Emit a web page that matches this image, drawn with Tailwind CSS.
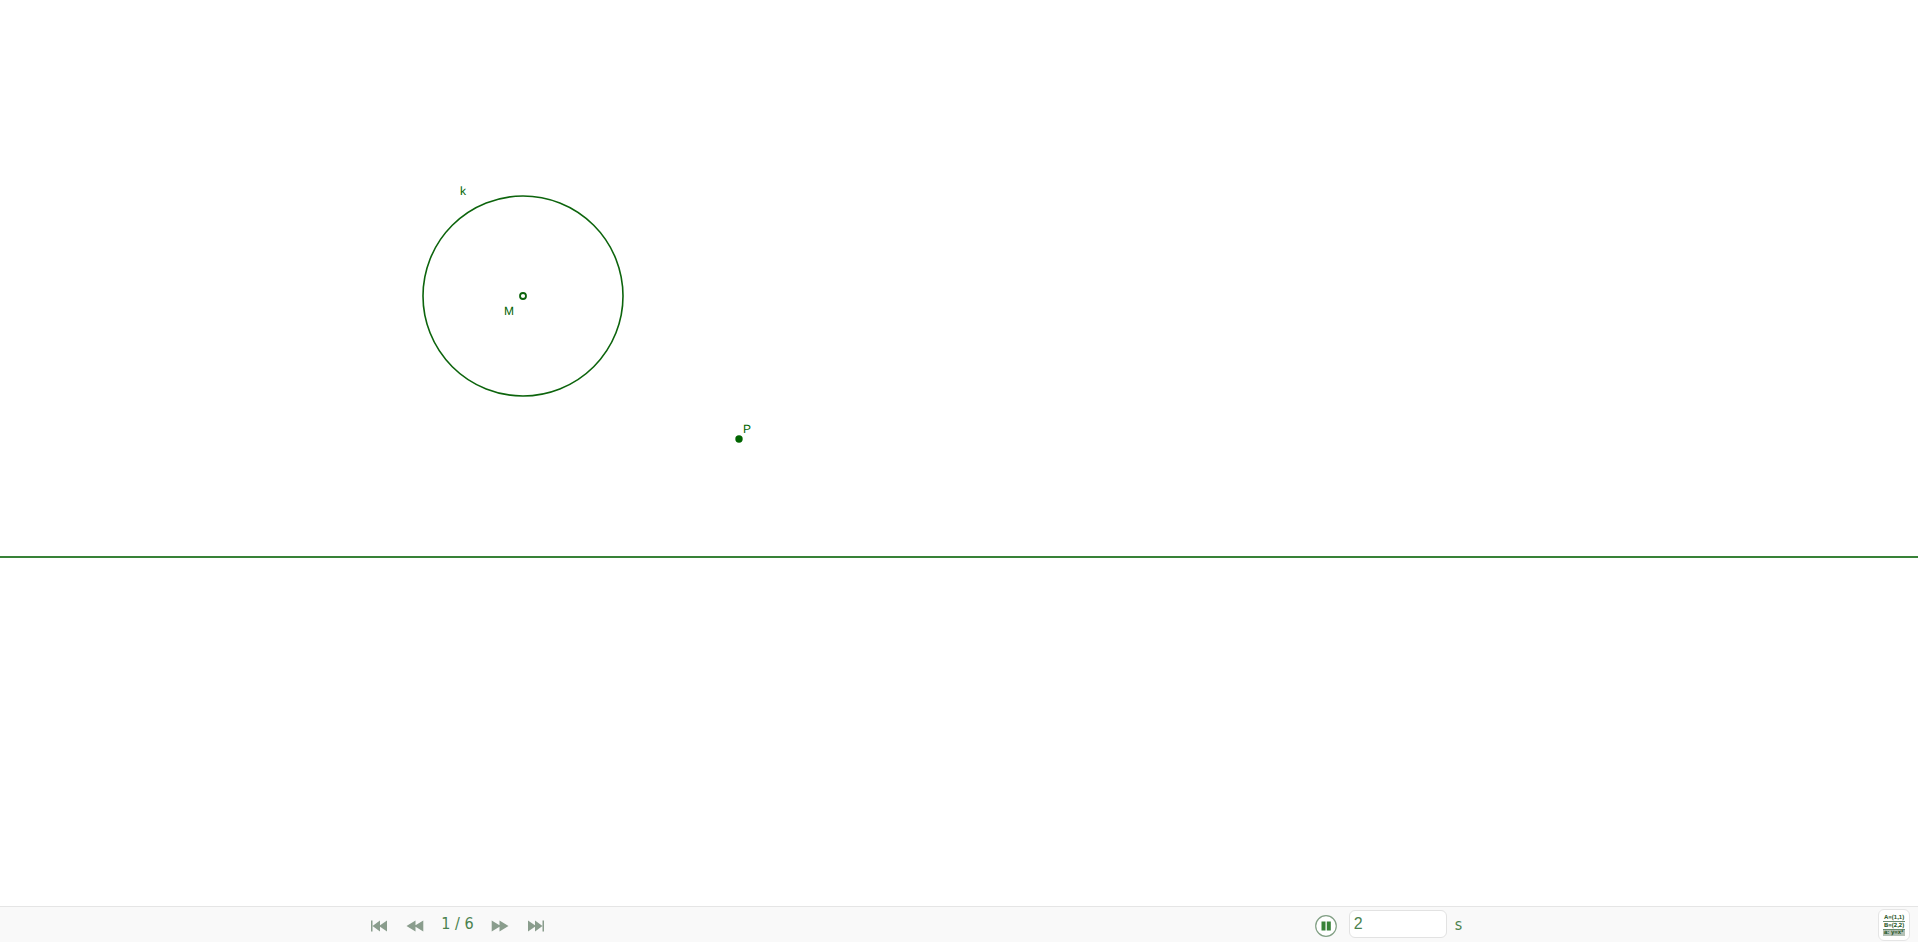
<!DOCTYPE html>
<html lang="en">
<head>
<meta charset="utf-8">
<title>Circle and point construction</title>
<script src="https://cdn.jsdelivr.net/npm/@tailwindcss/browser@4"></script>
</head>
<body class="flex h-screen flex-col overflow-hidden bg-white pr-0.5 pb-px font-['DejaVu_Sans_Condensed','DejaVu_Sans',sans-serif]">
  <main class="min-h-0 flex-1">
    <svg class="block h-full w-full font-['Liberation_Sans',sans-serif] text-xs" text-rendering="geometricPrecision" role="img" aria-label="Circle k with centre M, point P and a line">
      <line x1="0" y1="557" x2="100%" y2="557" stroke="#388238" stroke-width="2"/>
      <circle cx="523" cy="296" r="100" fill="none" stroke="#0c640c" stroke-width="1.6"/>
      <circle cx="523" cy="296" r="3" fill="#fff" stroke="#0c640c" stroke-width="1.8"/>
      <circle cx="739" cy="439" r="3.7" fill="#006400"/>
      <g fill="#006400">
        <text x="460" y="195">k</text>
        <text x="504" y="315">M</text>
        <text x="743" y="433">P</text>
      </g>
    </svg>
  </main>
  <footer class="flex h-9 shrink-0 items-center border-t border-[#e5e5e5] bg-[#f9f9f9] text-[#4b824e]">
    <nav class="flex flex-1 items-center justify-center pr-4" aria-label="Construction steps">
      <button type="button" aria-label="First step" class="flex h-8 w-9 items-center justify-center pt-0.5 text-[#8a9d8d]">
        <svg width="18" height="12" fill="currentColor"><path d="M1 .5h1.500v11H1zM10 .5v11L2.500 6zM17 .5v11L9 6z"/></svg>
      </button>
      <button type="button" aria-label="Previous step" class="flex h-8 w-9 items-center justify-center pt-0.5 text-[#8a9d8d]">
        <svg width="18" height="12" fill="currentColor"><path d="M9.500 .5v11L.5 6zM17.300 .5v11L8.300 6z"/></svg>
      </button>
      <span class="mx-2 pb-0.5 text-base leading-8">1 / 6</span>
      <button type="button" aria-label="Next step" class="flex h-8 w-9 items-center justify-center pt-0.5 text-[#8a9d8d]">
        <svg width="18" height="12" fill="currentColor"><path d="M.7 .5v11l9-5.500zM8.500 .5v11l9-5.500z"/></svg>
      </button>
      <button type="button" aria-label="Last step" class="flex h-8 w-9 items-center justify-center pt-0.5 text-[#8a9d8d]">
        <svg width="18" height="12" fill="currentColor"><path d="M1 .5v11l8-5.500zM8 .5v11l7.500-5.500zM15.500 .5H17v11h-1.500z"/></svg>
      </button>
    </nav>
    <div class="flex flex-1 items-center justify-center pr-8">
      <button type="button" aria-label="Pause" class="mr-3 pt-0.5">
        <svg class="block" width="22" height="22"><circle cx="11" cy="11" r="10.300" fill="#fff" stroke="#82a085" stroke-width="1.200"/><path d="M6.500 6.500h4v9H6.500zM11.800 6.500h4v9h-4z" fill="#388238"/></svg>
      </button>
      <input id="delay" type="text" value="2" aria-label="Delay in seconds" class="mb-0.5 h-7 w-[98px] rounded-md border border-[#e2e2e2] bg-white px-1 font-['Liberation_Sans',sans-serif] text-base leading-6 outline-none">
      <label for="delay" class="ml-2 text-base leading-8">s</label>
    </div>
    <button type="button" aria-label="Algebra view" class="mr-2 flex h-8 w-8 items-center justify-center rounded-md border border-[#e5e5e5] bg-white">
      <svg width="22" height="24" class="font-['Liberation_Sans',sans-serif] text-[6px] font-bold" text-rendering="geometricPrecision" fill="#1d5423">
        <path d="M0 17h22v6H0z" fill="#b4c1b6"/>
        <path d="M0 8h22v1H0zM0 16h22v1H0z" fill="#6a8a6e"/>
        <text x="1" y="6">A=(1,1)</text>
        <text x="1" y="14">B=(2,2)</text>
        <text x="1" y="21">a: y=x²</text>
      </svg>
    </button>
  </footer>
</body>
</html>
